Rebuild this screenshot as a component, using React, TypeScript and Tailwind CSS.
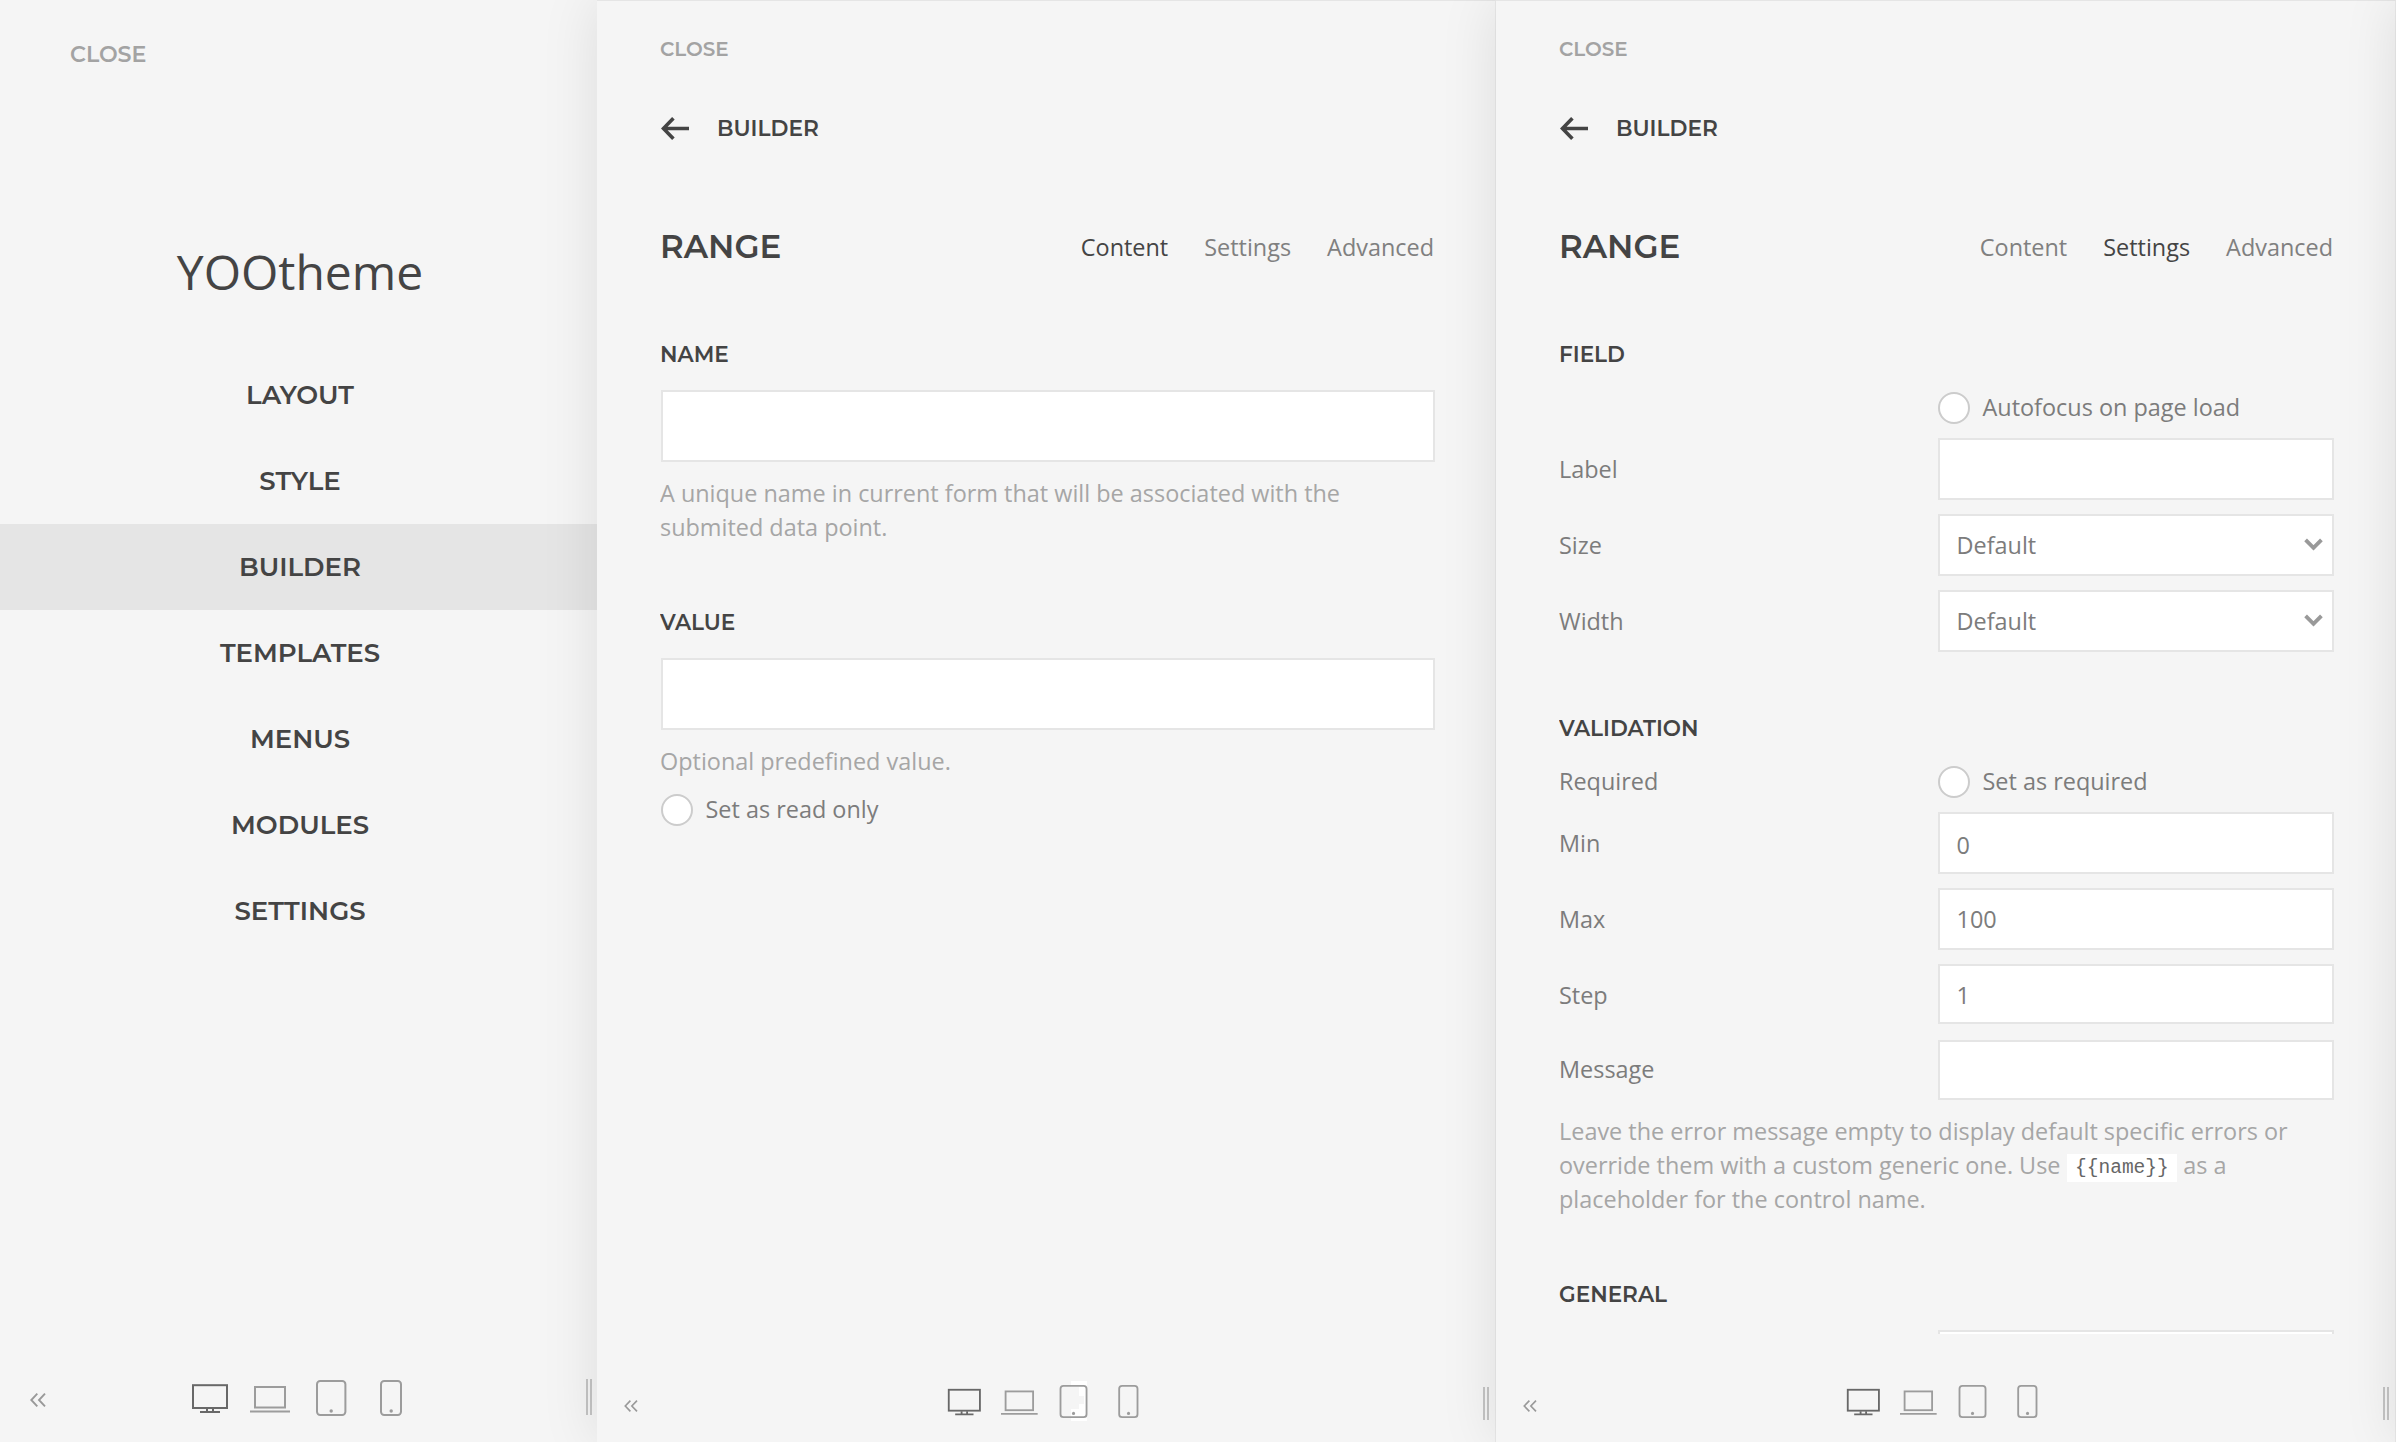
import React from "react";

type Device = "desktop" | "laptop" | "tablet" | "phone";

const MENU = ["Layout", "Style", "Builder", "Templates", "Menus", "Modules", "Settings"];
const TABS = ["Content", "Settings", "Advanced"];

function DeviceIcon({ kind, className }: { kind: Device; className: string }) {
  return (
    <svg viewBox="0 0 40 36" className={`overflow-visible shrink-0 ${className}`} fill="none">
      {kind === "desktop" && (
        <g stroke="#686868" strokeWidth="2">
          <rect x="3" y="5.2" width="34" height="22.8" />
          <path d="M17 28.5v2.5M23 28.5v2.5M10 32h20" />
        </g>
      )}
      {kind === "laptop" && (
        <g stroke="#9c9c9c" strokeWidth="2">
          <rect x="5" y="7" width="30" height="20.5" />
          <path d="M0 31.5h40" />
        </g>
      )}
      {kind === "tablet" && (
        <g>
          <rect x="6" y="1" width="28.4" height="34" rx="3.2" stroke="#9c9c9c" strokeWidth="2" />
          <circle cx="20.2" cy="31" r="1.7" fill="#9c9c9c" />
        </g>
      )}
      {kind === "phone" && (
        <g>
          <rect x="10" y="1" width="20" height="34" rx="3.2" stroke="#9c9c9c" strokeWidth="2" />
          <circle cx="20.2" cy="31" r="1.7" fill="#9c9c9c" />
        </g>
      )}
    </svg>
  );
}

function Collapse({ className }: { className: string }) {
  return (
    <svg viewBox="0 0 16 14" className={`shrink-0 ${className}`} fill="none" stroke="#999" strokeWidth="1.9">
      <path d="M7.3 .7 1.3 7l6 6.3M15 .7 9 7l6 6.3" />
    </svg>
  );
}

function Handle({ className }: { className: string }) {
  return <div className={`border-x-2 border-[#c4c4c4] w-[6px] shrink-0 ${className}`} />;
}

function Radio({ label }: { label: string }) {
  return (
    <div className="flex h-8 items-center">
      <span className="size-8 shrink-0 rounded-full border-2 border-[#ccc] bg-white" />
      <span className="ml-[12.5px] -mt-[2px] leading-[32px] whitespace-nowrap">{label}</span>
    </div>
  );
}

function Title({ children, className = "" }: { children: string; className?: string }) {
  return (
    <h3 className={`font-['Montserrat',sans-serif] text-[21.6px] font-semibold uppercase leading-[30px] text-[#444] ${className}`}>
      {children}
    </h3>
  );
}

function Field({
  label,
  value = "",
  select = false,
  className = "mt-[14px]",
  box = "h-[62px]",
  labelShift = "",
  valueShift = "",
}: {
  label: string;
  value?: string;
  select?: boolean;
  className?: string;
  box?: string;
  labelShift?: string;
  valueShift?: string;
}) {
  return (
    <div className={`flex items-center ${className}`}>
      <span className={`w-[379px] ${labelShift}`}>{label}</span>
      <div className={`flex flex-1 items-center justify-between border-2 border-[#e5e5e5] bg-white pl-[16.5px] pr-[9px] ${box}`}>
        <span className={valueShift}>{value}</span>
        {select && (
          <svg viewBox="0 0 19 13" className="-mt-[1px] h-[13px] w-[19px]" fill="none" stroke="#999" strokeWidth="3.8">
            <path d="M1.6 1.8 9.5 9.8l7.9-8" />
          </svg>
        )}
      </div>
    </div>
  );
}

function Panel({
  active,
  width,
  artifact = false,
  children,
}: {
  active: string;
  width: string;
  artifact?: boolean;
  children: React.ReactNode;
}) {
  return (
    <section
      className={`relative flex h-full shrink-0 flex-col border-r border-t border-r-[#e9e9e9] border-t-[#e5e5e5] bg-[#f5f5f5] shadow-[0_0_54px_rgba(0,0,0,0.1)] ${width}`}
    >
      <div className="ml-[63px] flex h-[1333px] w-[775px] flex-col overflow-hidden pt-[33px] text-[23.43px] leading-[34px] text-[#7c7c7c]">
        <div className="font-['Montserrat',sans-serif] text-[19.9px] font-semibold leading-[30px] text-[#a3a3a3]">CLOSE</div>
        <div className="mt-[48px] flex h-8 items-center">
          <svg viewBox="0 0 28 23" className="ml-[1px] mt-[1px] h-[23px] w-[28px]" fill="none" stroke="#444" strokeWidth="3.6">
            <path d="M28 11.5H3M12.4 1.3 2.4 11.5l10 10.2" />
          </svg>
          <span className="ml-[28px] font-['Montserrat',sans-serif] text-[21.7px] font-semibold leading-[32px] text-[#444]">BUILDER</span>
        </div>
        <div className="mt-[81px] flex h-[43px] justify-between">
          <h2 className="font-['Montserrat',sans-serif] text-[32.5px] font-semibold leading-[44px] text-[#444]">RANGE</h2>
          <nav className="flex gap-[36px] pr-[1px] leading-[44px]">
            {TABS.map((t) => (
              <span key={t} className={t === active ? "text-[#444]" : "text-[#808080]"}>
                {t}
              </span>
            ))}
          </nav>
        </div>
        {children}
      </div>
      <footer className="flex h-[108px] items-center">
        <Collapse className="ml-[27px] mt-[36px] h-[12px] w-[14px]" />
        <div className="relative ml-[308.4px] mt-[26px] flex gap-[17.7px]">
          {artifact && (
            <svg viewBox="0 0 16 40" className="absolute left-[125px] -top-[3.5px] h-[40px] w-[16px]" fill="#fff">
              <path d="M0 0H16V40H0V28H8V23H13V15H8V6H0Z" />
            </svg>
          )}
          <DeviceIcon kind="desktop" className="relative h-[33px] w-[36.7px]" />
          <DeviceIcon kind="laptop" className="relative h-[33px] w-[36.7px]" />
          <DeviceIcon kind="tablet" className="relative h-[33px] w-[36.7px]" />
          <DeviceIcon kind="phone" className="relative h-[33px] w-[36.7px]" />
        </div>
        <Handle className="ml-auto mr-[6px] mt-[30px] h-[33px]" />
      </footer>
    </section>
  );
}

export default function App() {
  return (
    <div className="flex h-[1442px] w-[2396px] overflow-hidden bg-[#f5f5f5] font-['Open_Sans',sans-serif]">
      <aside className="flex h-full w-[597px] shrink-0 flex-col pt-[40px]">
        <div className="pl-[70px] font-['Montserrat',sans-serif] text-[22.2px] font-semibold leading-[30px] text-[#a3a3a3]">CLOSE</div>
        <div className="mt-[170px] pl-[3px] text-center text-[48px] leading-[64px] text-[#444]">YOOtheme</div>
        <nav className="mt-[48px] font-['Montserrat',sans-serif] text-[26px] font-semibold uppercase text-[#444]">
          {MENU.map((m) => (
            <div key={m} className={`h-[86px] pl-[3px] text-center leading-[86px] ${m === "Builder" ? "bg-[#e5e5e5]" : ""}`}>
              {m}
            </div>
          ))}
        </nav>
        <footer className="mt-auto flex h-[108px] items-center">
          <Collapse className="ml-[30px] mt-[24px] h-[14px] w-[16px]" />
          <div className="ml-[144px] mt-[19px] flex gap-[20.4px]">
            <DeviceIcon kind="desktop" className="h-[36px] w-[40px]" />
            <DeviceIcon kind="laptop" className="h-[36px] w-[40px]" />
            <DeviceIcon kind="tablet" className="h-[36px] w-[40px]" />
            <DeviceIcon kind="phone" className="h-[36px] w-[40px]" />
          </div>
          <Handle className="ml-auto mr-[5px] mt-[18px] h-[36px]" />
        </footer>
      </aside>

      <Panel active="Content" width="w-[899px]" artifact>
        <Title className="mt-[71px]">Name</Title>
        <div className="ml-[1px] mt-[21px] h-[72px] shrink-0 border-2 border-[#e5e5e5] bg-white" />
        <p className="mt-[14px] text-[#a6a6a6]">
          A unique name in current form that will be associated with the
          <br />
          submited data point.
        </p>
        <Title className="mt-[63px]">Value</Title>
        <div className="ml-[1px] mt-[21px] h-[72px] shrink-0 border-2 border-[#e5e5e5] bg-white" />
        <p className="mt-[14px] text-[#a6a6a6]">Optional predefined value.</p>
        <div className="ml-[1px] mt-[16px]">
          <Radio label="Set as read only" />
        </div>
      </Panel>

      <Panel active="Settings" width="w-[900px]">
        <Title className="mt-[71px]">Field</Title>
        <div className="mt-[23px] ml-[379px]">
          <Radio label="Autofocus on page load" />
        </div>
        <Field label="Label" />
        <Field label="Size" value="Default" select />
        <Field label="Width" value="Default" select />
        <Title className="mt-[61px]">Validation</Title>
        <div className="mt-[23px] flex items-center">
          <span className="-mt-[2px] h-8 w-[379px] leading-[32px]">Required</span>
          <Radio label="Set as required" />
        </div>
        <Field label="Min" value="0" valueShift="mt-[4px]" />
        <Field label="Max" value="100" />
        <Field label="Step" value="1" box="h-[60px]" labelShift="mt-[2px]" valueShift="mt-[2px]" />
        <Field label="Message" className="mt-[16px]" box="h-[60px]" labelShift="-mt-[2px]" />
        <p className="mt-[14px] whitespace-nowrap text-[#a6a6a6]">
          Leave the error message empty to display default specific errors or
          <br />
          override them with a custom generic one. Use{" "}
          <code className="bg-white px-[8.5px] py-[3px] align-[1px] font-['Liberation_Mono',monospace] text-[19.5px] leading-[20px] text-[#666]">
            {"{{name}}"}
          </code>{" "}
          as a
          <br />
          placeholder for the control name.
        </p>
        <Title className="mt-[63px]">General</Title>
        <div className="mt-[21px] ml-[379px] h-[62px] shrink-0 border-2 border-[#e5e5e5] bg-white" />
      </Panel>

      {/* Preview area beyond the right edge, casting its shadow onto the last panel */}
      <div className="relative h-full w-[60px] shrink-0 bg-[#f5f5f5] shadow-[0_0_54px_rgba(0,0,0,0.1)]" />
    </div>
  );
}
